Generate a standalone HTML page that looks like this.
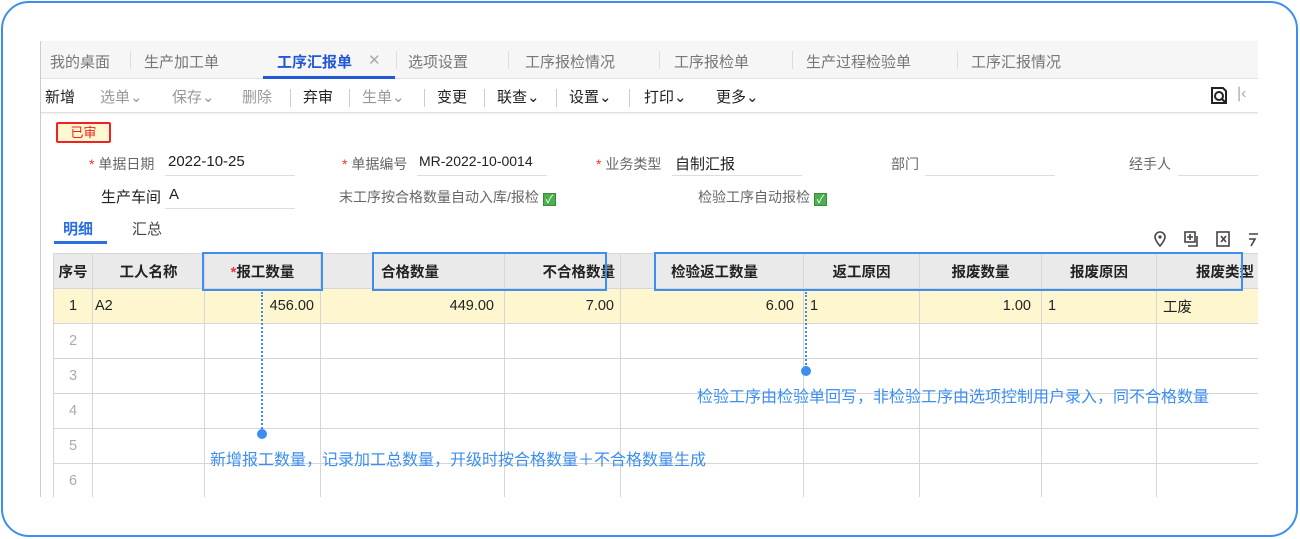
<!DOCTYPE html>
<html><head><meta charset="utf-8"><style>
*{margin:0;padding:0;box-sizing:border-box}
body{width:1300px;height:539px;background:#fff;position:relative;overflow:hidden;font-family:"Liberation Sans","Noto Sans CJK SC",sans-serif;font-size:14px;color:#222}
.a{position:absolute;white-space:nowrap}
.frame{position:absolute;left:1px;top:1px;width:1297px;height:536px;border:2px solid #3d8ef0;border-radius:28px}
.shot{position:absolute;left:40px;top:41px;width:1218px;height:456px;border-left:1px solid #ccc;overflow:hidden;background:#fff}
.tabs{position:absolute;left:0;top:0;width:1218px;height:38px;background:#f6f6f7;border-bottom:1px solid #e2e2e2}
.tab{position:absolute;top:10px;font-size:15px;color:#777}
.sep{position:absolute;top:10px;width:1px;height:18px;background:#ddd}
.tb{position:absolute;top:45px;font-size:15px}
.g{color:#999}
.lab{position:absolute;font-size:14px;color:#666}
.ul{position:absolute;height:1px;background:#ddd}
.req{color:#e33}
table{position:absolute;left:12px;top:212px;border-collapse:collapse;font-size:14.5px;table-layout:fixed;width:1213px}
td,th{border:1px solid #d6d6d6;height:35px;padding:0 6px;white-space:nowrap;overflow:hidden}
th{background:#eaeaea;font-weight:bold}
tr.y td{background:#fdf6cf}
td.n{color:#aaa;text-align:center}
.box{position:absolute;border:2px solid #3d8ef0}
.dl{position:absolute;width:0;border-left:2px dotted #3d8ef0}
.dot{position:absolute;width:10px;height:10px;border-radius:50%;background:#3d8ef0}
.note{position:absolute;color:#3d8ef0;font-size:16px;white-space:nowrap}
.chk{display:inline-block;width:13px;height:13px;background:#4caf50;border:1px solid #3a8a3a;color:#fff;font-size:11px;line-height:12px;text-align:center;vertical-align:-1px;margin-left:4px}
</style></head><body>
<div class="frame"></div>
<div class="shot">
 <div class="tabs">
  <span class="tab" style="left:9px">我的桌面</span><div class="sep" style="left:89px"></div>
  <span class="tab" style="left:103px">生产加工单</span>
  <span class="tab" style="left:236px;color:#2257d6;font-weight:bold">工序汇报单</span><span class="tab" style="left:327px;color:#aaa">✕</span>
  <div style="position:absolute;left:222px;top:35px;width:132px;height:3px;background:#2257d6"></div>
  <div class="sep" style="left:355px"></div>
  <span class="tab" style="left:367px">选项设置</span><div class="sep" style="left:467px"></div>
  <span class="tab" style="left:484px">工序报检情况</span><div class="sep" style="left:618px"></div>
  <span class="tab" style="left:633px">工序报检单</span><div class="sep" style="left:751px"></div>
  <span class="tab" style="left:765px">生产过程检验单</span><div class="sep" style="left:916px"></div>
  <span class="tab" style="left:930px">工序汇报情况</span>
 </div>
 <div style="position:absolute;left:0;top:39px;width:1218px;height:33px;border-bottom:1px solid #e0e0e0;box-shadow:0 1px 2px #eee"></div>
 <span class="tb" style="left:4px">新增</span>
 <span class="tb g" style="left:59px">选单⌄</span>
 <span class="tb g" style="left:131px">保存⌄</span>
 <span class="tb g" style="left:201px">删除</span>
 <span class="tb" style="left:262px">弃审</span>
 <span class="tb g" style="left:321px">生单⌄</span>
 <span class="tb" style="left:396px">变更</span>
 <span class="tb" style="left:456px">联查⌄</span>
 <span class="tb" style="left:528px">设置⌄</span>
 <span class="tb" style="left:603px">打印⌄</span>
 <span class="tb" style="left:675px">更多⌄</span>
 <div class="sep" style="left:249px;top:48px;background:#ccc"></div>
 <div class="sep" style="left:308px;top:48px;background:#ccc"></div>
 <div class="sep" style="left:383px;top:48px;background:#ccc"></div>
 <div class="sep" style="left:443px;top:48px;background:#ccc"></div>
 <div class="sep" style="left:515px;top:48px;background:#ccc"></div>
 <div class="sep" style="left:588px;top:48px;background:#ccc"></div>
 <svg class="a" style="left:1168px;top:45px" width="20" height="20" viewBox="0 0 20 20"><path d="M3 2h11l3 3v12H3z" fill="none" stroke="#222" stroke-width="2"/><circle cx="10" cy="10" r="4" fill="none" stroke="#222" stroke-width="2"/><path d="M13 13l4 4" stroke="#222" stroke-width="2"/></svg>
 <span class="a" style="left:1196px;top:44px;color:#aaa;font-size:16px">|‹</span>
 <div class="a" style="left:15px;top:81px;width:55px;height:21px;border:2px solid #e22;background:#fff8d0;color:#e22;font-size:13px;text-align:center;line-height:17px;border-radius:2px">已审</div>
 <span class="lab" style="left:48px;top:113px"><span class="req">* </span>单据日期</span><span class="a" style="left:127px;top:112px;font-size:15px">2022-10-25</span><div class="ul" style="left:124px;top:134px;width:130px"></div>
 <span class="lab" style="left:301px;top:113px"><span class="req">* </span>单据编号</span><span class="a" style="left:378px;top:112px;font-size:14px">MR-2022-10-0014</span><div class="ul" style="left:376px;top:134px;width:130px"></div>
 <span class="lab" style="left:555px;top:113px"><span class="req">* </span>业务类型</span><span class="a" style="left:634px;top:112px;font-size:15px">自制汇报</span><div class="ul" style="left:631px;top:134px;width:130px"></div>
 <span class="lab" style="left:850px;top:113px">部门</span><div class="ul" style="left:884px;top:134px;width:130px"></div>
 <span class="lab" style="left:1088px;top:113px">经手人</span><div class="ul" style="left:1137px;top:134px;width:81px"></div>
 <span class="a" style="left:60px;top:145px;font-size:15px">生产车间</span><span class="a" style="left:128px;top:145px;font-size:15px">A</span><div class="ul" style="left:124px;top:167px;width:130px"></div>
 <span class="lab" style="left:298px;top:146px">末工序按合格数量自动入库/报检<span class="chk">✓</span></span>
 <span class="lab" style="left:657px;top:146px">检验工序自动报检<span class="chk">✓</span></span>
 <span class="a" style="left:22px;top:177px;color:#2a6fe0;font-size:15px;font-weight:bold">明细</span>
 <div class="a" style="left:13px;top:200px;width:53px;height:3px;background:#2a6fe0"></div>
 <span class="a" style="left:91px;top:177px;font-size:15px;color:#444">汇总</span>
 <svg class="a" style="left:1110px;top:189px" width="120" height="18" viewBox="0 0 120 18"><path d="M9 16C4 10 4 8 4 7a5 5 0 0110 0c0 1 0 3-5 9z" fill="none" stroke="#444" stroke-width="1.6"/><circle cx="9" cy="7" r="1.6" fill="#444"/><rect x="34" y="2" width="10" height="10" fill="none" stroke="#444" stroke-width="1.6"/><path d="M39 4v6M36 7h6M46 6v10H37" fill="none" stroke="#444" stroke-width="1.6"/><rect x="66" y="2" width="12" height="14" fill="none" stroke="#444" stroke-width="1.6"/><path d="M70 6l5 6M75 6l-5 6" stroke="#444" stroke-width="1.6"/><path d="M98 4h10M98 9h6l-4 7" fill="none" stroke="#444" stroke-width="1.6"/></svg>
 <table>
  <colgroup><col style="width:39px"><col style="width:112px"><col style="width:116px"><col style="width:184px"><col style="width:116px"><col style="width:183px"><col style="width:116px"><col style="width:122px"><col style="width:115px"><col style="width:110px"></colgroup>
  <tr><th style="padding:0 2px">序号</th><th>工人名称</th><th><span class="req">*</span>报工数量</th><th style="text-align:left;padding-left:60px">合格数量</th><th style="text-align:right;padding-right:5px">不合格数量</th><th style="text-align:right;padding-right:45px">检验返工数量</th><th>返工原因</th><th>报废数量</th><th>报废原因</th><th style="text-align:right;padding-right:12px">报废类型</th></tr>
  <tr class="y"><td style="text-align:center">1</td><td style="padding-left:2px">A2</td><td style="text-align:right">456.00</td><td style="text-align:right;padding-right:10px">449.00</td><td style="text-align:right">7.00</td><td style="text-align:right;padding-right:9px">6.00</td><td>1</td><td style="text-align:right;padding-right:10px">1.00</td><td>1</td><td>工废</td></tr>
  <tr><td class="n">2</td><td></td><td></td><td></td><td></td><td></td><td></td><td></td><td></td><td></td></tr>
  <tr><td class="n">3</td><td></td><td></td><td></td><td></td><td></td><td></td><td></td><td></td><td></td></tr>
  <tr><td class="n">4</td><td></td><td></td><td></td><td></td><td></td><td></td><td></td><td></td><td></td></tr>
  <tr><td class="n">5</td><td></td><td></td><td></td><td></td><td></td><td></td><td></td><td></td><td></td></tr>
  <tr><td class="n">6</td><td></td><td></td><td></td><td></td><td></td><td></td><td></td><td></td><td></td></tr>
 </table>
</div>
<div class="box" style="left:202px;top:252px;width:121px;height:39px"></div>
<div class="box" style="left:372px;top:252px;width:235px;height:39px"></div>
<div class="box" style="left:654px;top:252px;width:589px;height:39px"></div>
<div class="dl" style="left:261px;top:292px;height:140px"></div>
<div class="dot" style="left:257px;top:429px"></div>
<div class="note" style="left:210px;top:446px">新增报工数量，记录加工总数量，开级时按合格数量＋不合格数量生成</div>
<div class="dl" style="left:805px;top:292px;height:76px"></div>
<div class="dot" style="left:801px;top:366px"></div>
<div class="note" style="left:697px;top:383px">检验工序由检验单回写，非检验工序由选项控制用户录入，同不合格数量</div>
</body></html>
